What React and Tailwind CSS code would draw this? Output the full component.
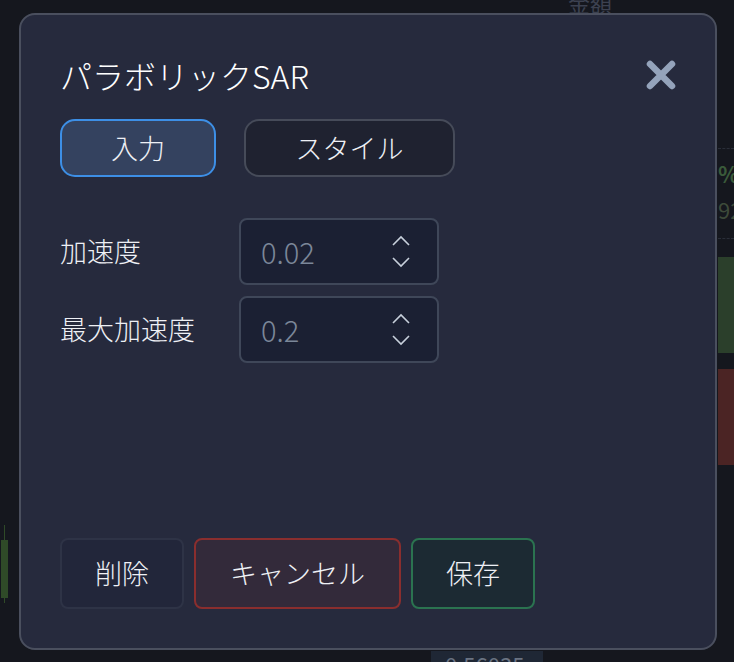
import React from "react";

const font = { fontFamily: '"Noto Sans CJK JP", "Noto Sans", sans-serif' };

function Chevrons() {
  return (
    <div className="flex flex-col items-center gap-[11px]">
      <svg width="20" height="11" viewBox="0 0 20 11" fill="none" stroke="#c8d0dc" strokeWidth="1.6">
        <path d="M2 10 L10 2 L18 10" />
      </svg>
      <svg width="20" height="11" viewBox="0 0 20 11" fill="none" stroke="#c8d0dc" strokeWidth="1.6">
        <path d="M2 1 L10 9 L18 1" />
      </svg>
    </div>
  );
}

function Field({ label, value }) {
  return (
    <div className="flex items-center">
      <div className="w-[179px] text-[27px] font-light text-[#eef0f5]">{label}</div>
      <div className="flex h-[67px] w-[200px] items-center justify-between rounded-[8px] border-2 border-[#3f4759] bg-[#1b2033] pl-[20px] pr-[26px]">
        <span className="text-[29px] font-light text-[#7b8799]">{value}</span>
        <Chevrons />
      </div>
    </div>
  );
}

function Candle({ color, wickTop, body, wickBottom }) {
  return (
    <div className="flex w-[7px] flex-col items-center">
      <div className="w-px" style={{ height: wickTop, background: color }} />
      <div className="w-full" style={{ height: body, background: color }} />
      <div className="w-px" style={{ height: wickBottom, background: color }} />
    </div>
  );
}

export default function App() {
  return (
    <div className="relative h-[662px] w-[734px] overflow-hidden bg-[#15171e]" style={font}>
      {/* chart behind the dialog */}
      <div className="absolute inset-0 flex">
        <div className="flex w-[20px] flex-col pl-[1px] pt-[525px]">
          <Candle color="#2f4a28" wickTop={15} body={58} wickBottom={5} />
        </div>
        <div className="flex flex-1 flex-col items-end">
          <div className="mr-[106px] mt-[-14px] text-[22px] text-[#3c4150]">金額</div>
          <div className="mt-auto mr-[175px] h-[11px] w-[112px] bg-[#1f2735] pl-[14px] text-[22px] leading-[26px] text-[#6a7382]">
            0.56035
          </div>
        </div>
        <div className="flex w-[16px] flex-col pt-[148px]">
          <div className="border-t border-dashed border-[#2a2e38]" />
          <div className="mt-[12px] text-[22px] font-bold leading-[24px] text-[#3a5a3a]">%</div>
          <div className="mt-[12px] text-[22px] leading-[24px] text-[#3d4a3a]">92</div>
          <div className="mt-[17px] border-t border-dashed border-[#2a2e38]" />
          <div className="mt-[18px] h-[96px] bg-[#2b3f2b]" />
          <div className="mt-[16px] h-[96px] bg-[#4b2424]" />
        </div>
      </div>

      {/* dialog */}
      <div className="absolute left-[19px] top-[13px] flex h-[637px] w-[698px] flex-col rounded-[16px] border-2 border-[#4a4f5e] bg-[#262a3d] px-[39px] pb-[39px] pt-[40px]">
        <div className="flex items-center justify-between">
          <h1 className="text-[32px] font-light leading-[40px] text-white">パラボリックSAR</h1>
          <svg width="36" height="36" viewBox="0 0 36 36" className="mr-[-3px]">
            <path d="M7 7 L29 29 M29 7 L7 29" stroke="#94a3bb" strokeWidth="6.5" strokeLinecap="round" />
          </svg>
        </div>

        <div className="mt-[24px] flex gap-[28px]">
          <button className="h-[58px] w-[156px] rounded-[15px] border-2 border-[#3d8fe6] bg-[#34425f] text-[27px] font-light text-[#eef0f5]">
            入力
          </button>
          <button className="h-[58px] w-[211px] rounded-[15px] border-2 border-[#464b59] bg-[#1f2230] text-[27px] font-light text-[#eef0f5]">
            スタイル
          </button>
        </div>

        <div className="mt-[41px] flex flex-col gap-[11px]">
          <Field label="加速度" value="0.02" />
          <Field label="最大加速度" value="0.2" />
        </div>

        <div className="mt-auto flex gap-[10px]">
          <button className="h-[71px] w-[124px] rounded-[8px] border-2 border-[#2e3346] bg-[#22263a] text-[27px] font-light text-[#eef0f5]">
            削除
          </button>
          <button className="h-[71px] w-[207px] rounded-[8px] border-2 border-[#8a2e2e] bg-[#332a3a] text-[27px] font-light text-[#eef0f5]">
            キャンセル
          </button>
          <button className="h-[71px] w-[124px] rounded-[8px] border-2 border-[#2b7350] bg-[#1c2a33] text-[27px] font-light text-[#eef0f5]">
            保存
          </button>
        </div>
      </div>
    </div>
  );
}
